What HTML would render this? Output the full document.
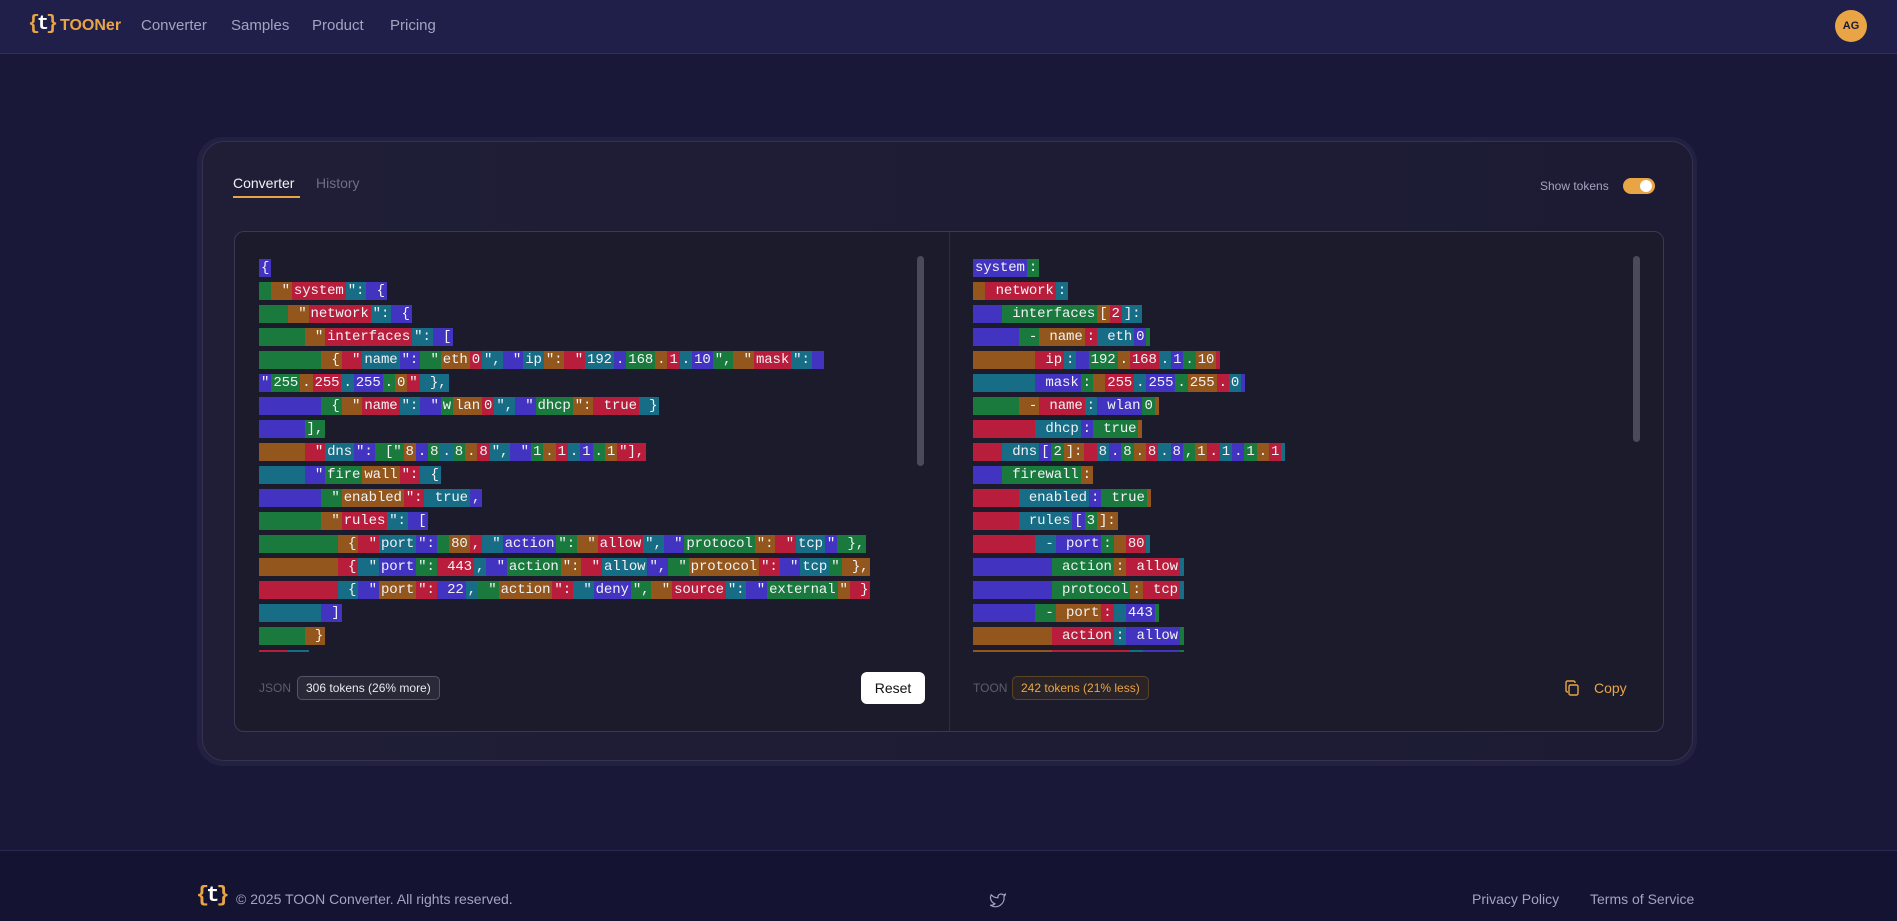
<!DOCTYPE html>
<html><head><meta charset="utf-8"><style>
*{box-sizing:border-box;margin:0;padding:0}
body{width:1897px;height:921px;overflow:hidden;background:#1a1839;font-family:"Liberation Sans",sans-serif;position:relative}
.hdr{position:absolute;left:0;top:0;width:1897px;height:54px;background:#201f4a;border-bottom:1px solid #2f2d6a}
.logo{position:absolute;font-family:"Liberation Mono",monospace;font-weight:bold;color:#e9a545;letter-spacing:-3px}
.logo b{color:#fff}
.nav{position:absolute;top:17px;font-size:15px;color:#a4a3c0}
.av{position:absolute;left:1835px;top:10px;width:32px;height:32px;border-radius:50%;background:#e9a545;color:#1a1839;font-weight:bold;font-size:11px;text-align:center;line-height:32px}
.outer{position:absolute;left:197px;top:137px;width:1500px;height:629px;border-radius:26px;background:#232142}
.card{position:absolute;left:202px;top:141px;width:1491px;height:620px;border-radius:22px;background:linear-gradient(90deg,#1f1e36,#1c1b33);border:1px solid #34324f}
.tab{position:absolute;top:175px;font-size:14px}
.ed{position:absolute;left:234px;top:231px;width:1430px;height:501px;border:1px solid #3a3856;border-radius:10px;background:#1c1b2b}
.div{position:absolute;left:949px;top:232px;width:1px;height:499px;background:#2f2d44}
.code{position:absolute;top:259px;height:393px;overflow:hidden;font-family:"Liberation Mono",monospace;font-size:14px;letter-spacing:-0.1px;color:#f2f2f6;white-space:normal}
.code div{height:23px;white-space:nowrap}
.code s{text-decoration:none;display:inline-block;height:18px;line-height:18px;vertical-align:top;min-width:4px;white-space:pre;padding:0 2px}
.g{background:#1a7a3e}.b{background:#93561c}.r{background:#b81e3c}.t{background:#166d85}.i{background:#4233c0}
.sb{position:absolute;width:7px;border-radius:4px;background:#4a4a5a}
.lbl{position:absolute;font-size:12px;color:#5d5c72;top:681px}
.badge{position:absolute;top:676px;height:24px;border-radius:5px;font-size:12px;line-height:22px;padding:0 8px}
.ft{position:absolute;left:0;top:850px;width:1897px;height:71px;background:#141331;border-top:1px solid #2a2850}
.fl{position:absolute;top:891px;font-size:14px;color:#a4a3c0}
</style></head><body>
<div class="hdr"></div>
<div class="logo" style="left:28px;top:13px;font-size:20px">{<b>t</b>}</div>
<div class="logo" style="left:60px;top:17px;font-size:16px;font-family:'Liberation Sans',sans-serif;letter-spacing:0">TOONer</div>
<div class="nav" style="left:141px">Converter</div>
<div class="nav" style="left:231px">Samples</div>
<div class="nav" style="left:312px">Product</div>
<div class="nav" style="left:390px">Pricing</div>
<div class="av">AG</div>

<div class="outer"></div>
<div class="card"></div>
<div class="tab" style="left:233px;color:#f2f2f6">Converter</div>
<div style="position:absolute;left:233px;top:196px;width:67px;height:2px;background:#e9a545"></div>
<div class="tab" style="left:316px;color:#6f6e87">History</div>
<div style="position:absolute;left:1540px;top:179px;font-size:12px;color:#a4a3c0">Show tokens</div>
<div style="position:absolute;left:1623px;top:178px;width:32px;height:16px;border-radius:8px;background:#e9a545"></div>
<div style="position:absolute;left:1640px;top:180px;width:12px;height:12px;border-radius:50%;background:#fff"></div>

<div class="ed"></div>
<div class="div"></div>

<div class="code" style="left:259px;width:650px">
<div><s class="i">{</s></div>
<div><s class="g"> </s><s class="b"> "</s><s class="r">system</s><s class="t">":</s><s class="i"> {</s></div>
<div><s class="g">   </s><s class="b"> "</s><s class="r">network</s><s class="t">":</s><s class="i"> {</s></div>
<div><s class="g">     </s><s class="b"> "</s><s class="r">interfaces</s><s class="t">":</s><s class="i"> [</s></div>
<div><s class="g">       </s><s class="b"> {</s><s class="r"> "</s><s class="t">name</s><s class="i">":</s><s class="g"> "</s><s class="b">eth</s><s class="r">0</s><s class="t">",</s><s class="i"> "</s><s class="t">ip</s><s class="b">":</s><s class="r"> "</s><s class="t">192</s><s class="i">.</s><s class="g">168</s><s class="b">.</s><s class="r">1</s><s class="t">.</s><s class="i">10</s><s class="g">",</s><s class="b"> "</s><s class="r">mask</s><s class="t">":</s><s class="i"> </s></div>
<div><s class="i">"</s><s class="g">255</s><s class="b">.</s><s class="r">255</s><s class="t">.</s><s class="i">255</s><s class="g">.</s><s class="b">0</s><s class="r">"</s><s class="t"> },</s></div>
<div><s class="i">       </s><s class="g"> {</s><s class="b"> "</s><s class="r">name</s><s class="t">":</s><s class="i"> "</s><s class="g">w</s><s class="b">lan</s><s class="r">0</s><s class="t">",</s><s class="i"> "</s><s class="g">dhcp</s><s class="b">":</s><s class="r"> true</s><s class="t"> }</s></div>
<div><s class="i">     </s><s class="g">],</s></div>
<div><s class="b">     </s><s class="r"> "</s><s class="t">dns</s><s class="i">":</s><s class="g"> ["</s><s class="b">8</s><s class="i">.</s><s class="g">8</s><s class="t">.</s><s class="g">8</s><s class="b">.</s><s class="r">8</s><s class="t">",</s><s class="i"> "</s><s class="g">1</s><s class="b">.</s><s class="r">1</s><s class="t">.</s><s class="i">1</s><s class="g">.</s><s class="b">1</s><s class="r">"],</s></div>
<div><s class="t">     </s><s class="i"> "</s><s class="g">fire</s><s class="b">wall</s><s class="r">":</s><s class="t"> {</s></div>
<div><s class="i">       </s><s class="g"> "</s><s class="b">enabled</s><s class="r">":</s><s class="t"> true</s><s class="i">,</s></div>
<div><s class="g">       </s><s class="b"> "</s><s class="r">rules</s><s class="t">":</s><s class="i"> [</s></div>
<div><s class="g">         </s><s class="b"> {</s><s class="r"> "</s><s class="t">port</s><s class="i">":</s><s class="g"> </s><s class="b">80</s><s class="r">,</s><s class="t"> "</s><s class="i">action</s><s class="g">":</s><s class="b"> "</s><s class="r">allow</s><s class="t">",</s><s class="i"> "</s><s class="g">protocol</s><s class="b">":</s><s class="r"> "</s><s class="t">tcp</s><s class="i">"</s><s class="g"> },</s></div>
<div><s class="b">         </s><s class="r"> {</s><s class="t"> "</s><s class="i">port</s><s class="g">":</s><s class="r"> 443</s><s class="t">,</s><s class="i"> "</s><s class="g">action</s><s class="b">":</s><s class="r"> "</s><s class="t">allow</s><s class="i">",</s><s class="g"> "</s><s class="b">protocol</s><s class="r">":</s><s class="i"> "</s><s class="t">tcp</s><s class="g">"</s><s class="b"> },</s></div>
<div><s class="r">         </s><s class="t"> {</s><s class="i"> "</s><s class="b">port</s><s class="r">":</s><s class="i"> 22</s><s class="t">,</s><s class="g"> "</s><s class="b">action</s><s class="r">":</s><s class="t"> "</s><s class="i">deny</s><s class="g">",</s><s class="b"> "</s><s class="r">source</s><s class="t">":</s><s class="i"> "</s><s class="g">external</s><s class="b">"</s><s class="r"> }</s></div>
<div><s class="t">       </s><s class="i"> ]</s></div>
<div><s class="g">     </s><s class="b"> }</s></div>
<div><s class="r">   </s><s class="t"> }</s></div>
</div>

<div class="code" style="left:973px;width:640px">
<div><s class="i">system</s><s class="g">:</s></div>
<div><s class="b"> </s><s class="r"> network</s><s class="t">:</s></div>
<div><s class="i">   </s><s class="g"> interfaces</s><s class="b">[</s><s class="r">2</s><s class="t">]:</s></div>
<div><s class="i">     </s><s class="g"> -</s><s class="b"> name</s><s class="r">:</s><s class="t"> eth</s><s class="i">0</s><s class="g"></s></div>
<div><s class="b">       </s><s class="r"> ip</s><s class="t">:</s><s class="i"> </s><s class="g">192</s><s class="b">.</s><s class="r">168</s><s class="t">.</s><s class="i">1</s><s class="g">.</s><s class="b">10</s><s class="r"></s></div>
<div><s class="t">       </s><s class="i"> mask</s><s class="g">:</s><s class="b"> </s><s class="r">255</s><s class="t">.</s><s class="i">255</s><s class="g">.</s><s class="b">255</s><s class="r">.</s><s class="t">0</s><s class="i"></s></div>
<div><s class="g">     </s><s class="b"> -</s><s class="r"> name</s><s class="t">:</s><s class="i"> wlan</s><s class="g">0</s><s class="b"></s></div>
<div><s class="r">       </s><s class="t"> dhcp</s><s class="i">:</s><s class="g"> true</s><s class="b"></s></div>
<div><s class="r">   </s><s class="t"> dns</s><s class="i">[</s><s class="g">2</s><s class="b">]:</s><s class="r"> </s><s class="t">8</s><s class="i">.</s><s class="g">8</s><s class="b">.</s><s class="r">8</s><s class="t">.</s><s class="i">8</s><s class="g">,</s><s class="b">1</s><s class="r">.</s><s class="t">1</s><s class="i">.</s><s class="g">1</s><s class="b">.</s><s class="r">1</s><s class="t"></s></div>
<div><s class="i">   </s><s class="g"> firewall</s><s class="b">:</s></div>
<div><s class="r">     </s><s class="t"> enabled</s><s class="i">:</s><s class="g"> true</s><s class="b"></s></div>
<div><s class="r">     </s><s class="t"> rules</s><s class="i">[</s><s class="g">3</s><s class="b">]:</s></div>
<div><s class="r">       </s><s class="t"> -</s><s class="i"> port</s><s class="g">:</s><s class="b"> </s><s class="r">80</s><s class="t"></s></div>
<div><s class="i">         </s><s class="g"> action</s><s class="b">:</s><s class="r"> allow</s><s class="t"></s></div>
<div><s class="i">         </s><s class="g"> protocol</s><s class="b">:</s><s class="r"> tcp</s><s class="t"></s></div>
<div><s class="i">       </s><s class="g"> -</s><s class="b"> port</s><s class="r">:</s><s class="t"> </s><s class="i">443</s><s class="g"></s></div>
<div><s class="b">         </s><s class="r"> action</s><s class="t">:</s><s class="i"> allow</s><s class="g"></s></div>
<div><s class="b">         </s><s class="r"> protocol</s><s class="t">:</s><s class="i"> tcp</s><s class="g"></s></div>
</div>

<div class="sb" style="left:917px;top:256px;height:210px"></div>
<div class="sb" style="left:1633px;top:256px;height:186px"></div>

<div class="lbl" style="left:259px">JSON</div>
<div class="badge" style="left:297px;border:1px solid #55546a;background:#2a2938;color:#e8e8ee">306 tokens (26% more)</div>
<div style="position:absolute;left:861px;top:672px;width:64px;height:32px;border-radius:6px;background:#fff;color:#111;font-size:14px;text-align:center;line-height:32px">Reset</div>

<div class="lbl" style="left:973px">TOON</div>
<div class="badge" style="left:1012px;border:1px solid #5a4426;background:#2a2428;color:#e9a545">242 tokens (21% less)</div>
<svg style="position:absolute;left:1564px;top:680px" width="16" height="16" viewBox="0 0 16 16" fill="none" stroke="#e9a545" stroke-width="1.4"><rect x="5" y="5" width="9" height="10" rx="1.5"/><path d="M11 3V2.5A1.5 1.5 0 0 0 9.5 1h-6A1.5 1.5 0 0 0 2 2.5v8A1.5 1.5 0 0 0 3.5 12H4"/></svg>
<div style="position:absolute;left:1594px;top:680px;font-size:14px;color:#e9a545">Copy</div>

<div class="ft"></div>
<div class="logo" style="left:196px;top:883px;font-size:22px">{<b>t</b>}</div>
<div class="fl" style="left:236px;font-size:14px">© 2025 TOON Converter. All rights reserved.</div>
<svg style="position:absolute;left:988px;top:891px" width="20" height="18" viewBox="0 0 24 24" fill="none" stroke="#a4a3c0" stroke-width="1.6" stroke-linejoin="round"><path d="M22 4s-.7 2.1-2 3.4c1.6 10-9.4 17.3-18 11.6 2.2.1 4.4-.6 6-2C3 15.5.5 9.6 3 5c2.2 2.6 5.6 4.1 9 4-.9-4.2 4-6.6 7-3.8 1.1 0 3-1.2 3-1.2z"/></svg>
<div class="fl" style="left:1472px">Privacy Policy</div>
<div class="fl" style="left:1590px">Terms of Service</div>
</body></html>
